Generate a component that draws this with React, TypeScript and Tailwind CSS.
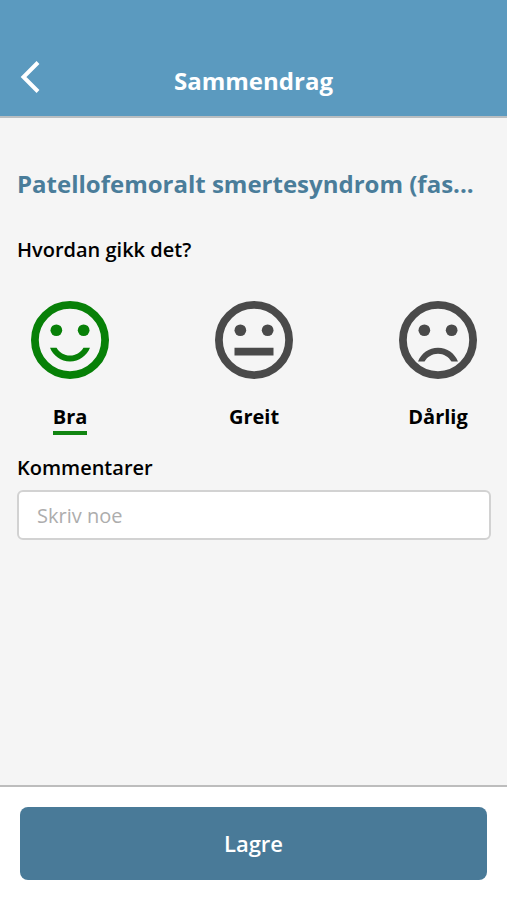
import { useState } from "react";

const ratings = [
  {
    value: "bra",
    label: "Bra",
    mouth:
      "M12 16c-1.48 0-2.75-.81-3.45-2H6.88c.8 2.05 2.79 3.5 5.12 3.5s4.32-1.45 5.12-3.5h-1.67c-.7 1.19-1.97 2-3.45 2z",
  },
  { value: "greit", label: "Greit", mouth: "M7 14h10v2H7z" },
  {
    value: "darlig",
    label: "Dårlig",
    mouth:
      "M12 14c-2.33 0-4.32 1.45-5.12 3.5h1.67c.69-1.19 1.97-2 3.45-2s2.75.81 3.45 2h1.67c-.8-2.05-2.79-3.5-5.12-3.5z",
  },
];

function Face({ mouth }: { mouth: string }) {
  return (
    <svg viewBox="2 2 20 20" className="size-[78px]" fill="currentColor" aria-hidden="true">
      <circle cx="12" cy="12" r="9" fill="none" stroke="currentColor" strokeWidth="2" />
      <circle cx="8.5" cy="9.5" r="1.5" />
      <circle cx="15.5" cy="9.5" r="1.5" />
      <path d={mouth} />
    </svg>
  );
}

export default function App() {
  const [rating, setRating] = useState("bra");
  const [note, setNote] = useState("");

  return (
    <div className="flex min-h-screen flex-col bg-[#f5f5f5] font-['Open_Sans',sans-serif] text-black">
      <header className="grid grid-cols-[1fr_auto_1fr] items-center border-b-2 border-[#b9bec1] bg-[#5b9abf] px-5 pt-15 pb-3.5">
        <button type="button" aria-label="Tilbake" className="mb-2 justify-self-start text-white">
          <svg viewBox="0 0 20 34" className="h-[34px] w-5" fill="none" stroke="currentColor" strokeWidth="4" aria-hidden="true">
            <path d="M18 2.5 3.5 17 18 31.5" />
          </svg>
        </button>
        <h1 className="text-2xl font-bold text-white">Sammendrag</h1>
      </header>

      <main className="flex grow flex-col pt-[50px] pr-4 pl-[17px]">
        <h2 className="truncate text-2xl font-bold text-[#4a7d9a]">Patellofemoralt smertesyndrom (fas...</h2>

        <fieldset className="mt-9">
          <legend className="text-xl font-semibold">Hvordan gikk det?</legend>
          <div className="mt-[37px] flex justify-between px-3.5">
            {ratings.map(({ value, label, mouth }) => (
              <label key={value} className="group flex w-[78px] cursor-pointer flex-col items-center">
                <input
                  type="radio"
                  name="rating"
                  value={value}
                  checked={rating === value}
                  onChange={() => setRating(value)}
                  className="peer sr-only"
                />
                <span className="text-[#4a4a4a] peer-checked:text-[#078007]">
                  <Face mouth={mouth} />
                </span>
                <span className="mt-6 border-b-4 border-transparent text-xl font-bold peer-checked:border-[#118511]">
                  {label}
                </span>
              </label>
            ))}
          </div>
        </fieldset>

        <label htmlFor="note" className="mt-[19px] text-xl font-semibold">
          Kommentarer
        </label>
        <input
          id="note"
          type="text"
          value={note}
          onChange={(event) => setNote(event.target.value)}
          placeholder="Skriv noe"
          className="mt-2 h-[50px] w-full rounded-md border-2 border-[#d2d2d2] bg-white px-[18px] text-xl outline-none placeholder:text-[#adadad]"
        />
      </main>

      <footer className="border-t-2 border-[#bdbdbd] bg-white p-5">
        <button type="button" className="h-[73px] w-full rounded-lg bg-[#497a98] text-[22px] font-semibold text-white">
          Lagre
        </button>
      </footer>
    </div>
  );
}
